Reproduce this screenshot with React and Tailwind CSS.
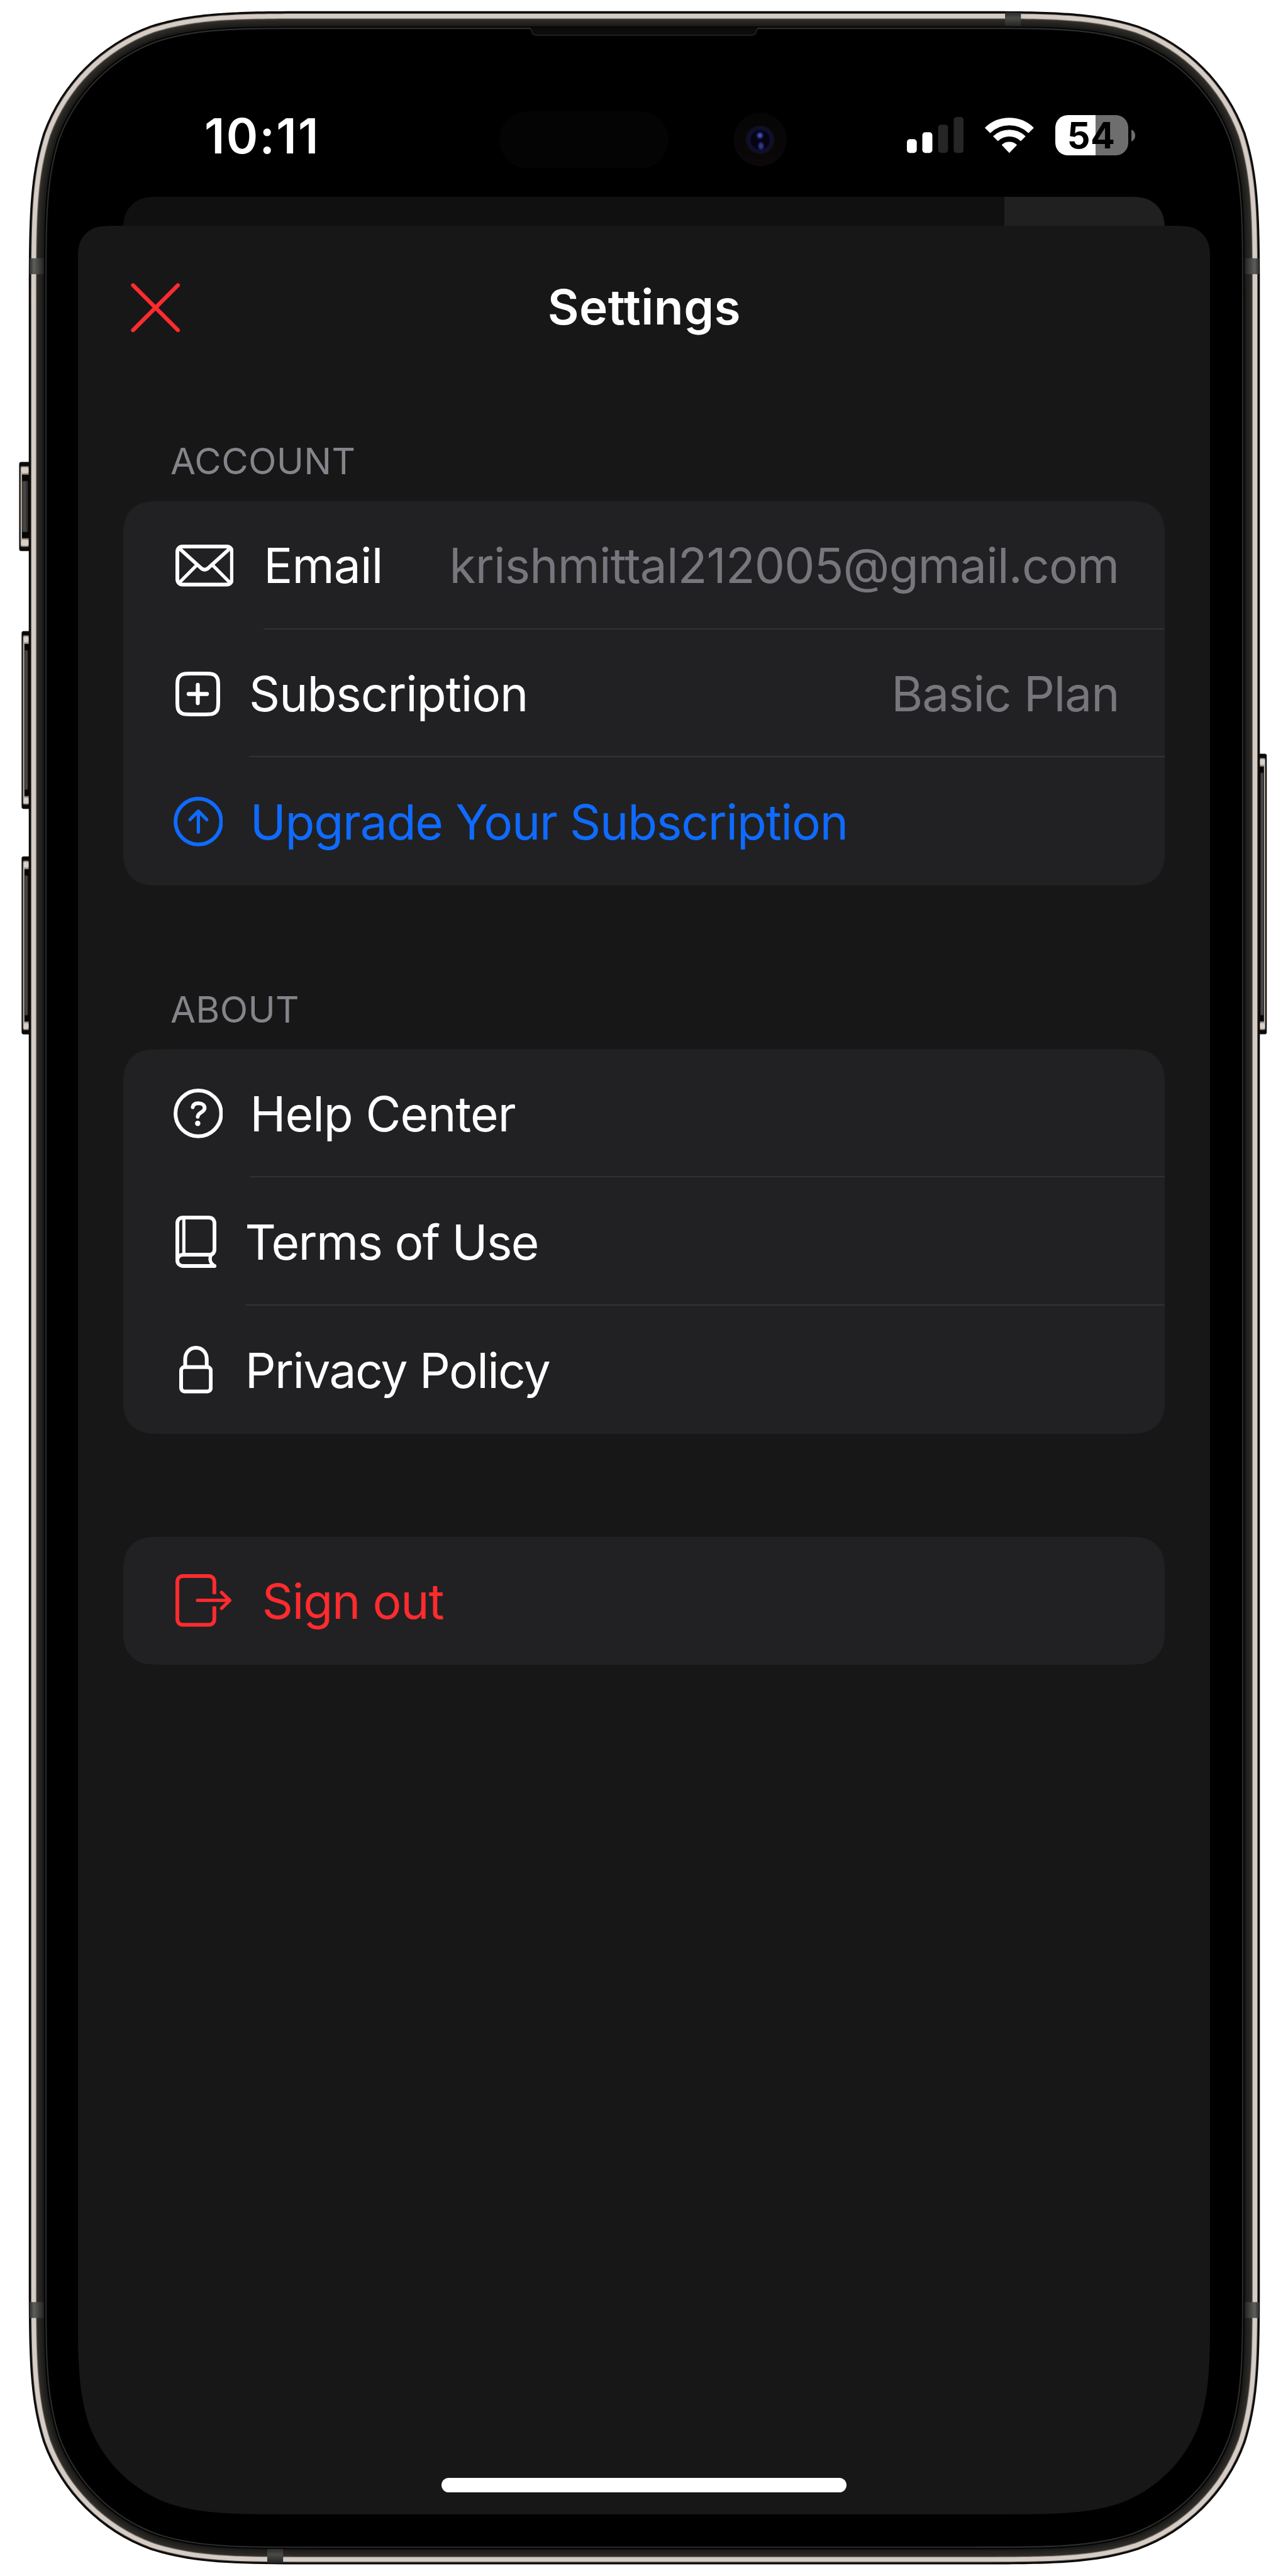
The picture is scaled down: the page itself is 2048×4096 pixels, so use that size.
// Rounded rectangle with continuous (smoothed) corners; rt and rb are the top and bottom radii.
function smoothRect(x, y, w, h, rt, rb = rt) {
  const A = 1.5287, B = 1.0885, C = 0.8684, D = 0.6315, E = 0.0749, F = 0.169, G = 0.3728;
  const r = x + w;
  const b = y + h;
  return [
    `M${x + A * rt} ${y} L${r - A * rt} ${y}`,
    `C${r - B * rt} ${y} ${r - C * rt} ${y} ${r - D * rt} ${y + E * rt}`,
    `C${r - G * rt} ${y + F * rt} ${r - F * rt} ${y + G * rt} ${r - E * rt} ${y + D * rt}`,
    `C${r} ${y + C * rt} ${r} ${y + B * rt} ${r} ${y + A * rt}`,
    `L${r} ${b - A * rb}`,
    `C${r} ${b - B * rb} ${r} ${b - C * rb} ${r - E * rb} ${b - D * rb}`,
    `C${r - F * rb} ${b - G * rb} ${r - G * rb} ${b - F * rb} ${r - D * rb} ${b - E * rb}`,
    `C${r - C * rb} ${b} ${r - B * rb} ${b} ${r - A * rb} ${b}`,
    `L${x + A * rb} ${b}`,
    `C${x + B * rb} ${b} ${x + C * rb} ${b} ${x + D * rb} ${b - E * rb}`,
    `C${x + G * rb} ${b - F * rb} ${x + F * rb} ${b - G * rb} ${x + E * rb} ${b - D * rb}`,
    `C${x} ${b - C * rb} ${x} ${b - B * rb} ${x} ${b - A * rb}`,
    `L${x} ${y + A * rt}`,
    `C${x} ${y + B * rt} ${x} ${y + C * rt} ${x + E * rt} ${y + D * rt}`,
    `C${x + F * rt} ${y + G * rt} ${x + G * rt} ${y + F * rt} ${x + D * rt} ${y + E * rt}`,
    `C${x + C * rt} ${y} ${x + B * rt} ${y} ${x + A * rt} ${y} Z`,
  ].join(' ');
}

/* ---------- Device body ---------- */

const rings = [
  [0, '#0b0b0b'],
  [4.6, '#5f564f'],
  [6.2, '#d5ccc5'],
  [16.4, '#8f867e'],
  [17.8, '#3b3936'],
  [20, '#2a2926'],
  [25, '#242320'],
  [30, '#1d1c1a'],
  [35, '#060606'],
  [38.6, '#2c2c2c'],
  [41.6, '#000000'],
];

function SideButton({ x, y, h, w, flip }) {
  return (
    <g transform={flip ? `translate(${x + w} ${y}) scale(-1 1)` : `translate(${x} ${y})`}>
      <rect x="0" y="0" width={w + 4} height={h} rx="5" fill="#0b0b0b" />
      <rect x="3.2" y="10" width={w - 3} height={h - 20} rx="3" fill="#8f867e" />
      <rect x="4.4" y="12.5" width={w - 5.5} height="14" rx="4" fill="#d9cfc7" />
      <rect x="4.4" y={h - 26.5} width={w - 5.5} height="14" rx="4" fill="#d9cfc7" />
      <rect x="3.6" y="24" width="3" height={h - 48} fill="#b9aea5" />
      <rect x="6.6" y="30" width={w - 4} height={h - 60} fill="#050505" />
      <rect x="6.6" y="44" width={w - 9} height={h - 88} rx="3" fill="#343230" />
      <rect x="9" y="46" width={(w - 9) / 2} height={h - 92} rx="2" fill="#484543" />
    </g>
  );
}

function DeviceBody() {
  return (
    <svg viewBox="0 0 3000 6000" className="absolute inset-0 h-full w-full" aria-hidden="true">
      <defs>
        <linearGradient id="bandL" x1="0" x2="1" y1="0" y2="0">
          <stop offset="0" stopColor="#2e2e2d" />
          <stop offset="0.3" stopColor="#5e5e5c" />
          <stop offset="1" stopColor="#242423" />
        </linearGradient>
        <linearGradient id="bandR" x1="1" x2="0" y1="0" y2="0">
          <stop offset="0" stopColor="#2e2e2d" />
          <stop offset="0.3" stopColor="#5e5e5c" />
          <stop offset="1" stopColor="#242423" />
        </linearGradient>
        <linearGradient id="bandT" x1="0" x2="0" y1="0" y2="1">
          <stop offset="0" stopColor="#2c2c2b" />
          <stop offset="0.4" stopColor="#4a4a48" />
          <stop offset="1" stopColor="#242423" />
        </linearGradient>
        <radialGradient id="lensTop">
          <stop offset="0" stopColor="#5c62c4" />
          <stop offset="0.5" stopColor="#2a2a82" />
          <stop offset="1" stopColor="#0a0a25" stopOpacity="0" />
        </radialGradient>
        <radialGradient id="lensLow">
          <stop offset="0" stopColor="#1b5a68" />
          <stop offset="0.6" stopColor="#301a78" />
          <stop offset="1" stopColor="#0a0a25" stopOpacity="0" />
        </radialGradient>
        <linearGradient id="lensHalo" x1="0" x2="0" y1="0" y2="1">
          <stop offset="0" stopColor="#060606" />
          <stop offset="1" stopColor="#0b070a" />
        </linearGradient>
      </defs>
      <SideButton x={44.6} y={1075.8} w={23} h={207.7} />
      <SideButton x={50.3} y={1470} w={17.5} h={414} />
      <SideButton x={50.3} y={1994.7} w={17.5} h={414.5} />
      <SideButton x={2933} y={1755.5} w={17.5} h={653.5} flip />
      {rings.map(([i, fill]) => (
        <path key={i} d={smoothRect(67 + i, 26 + i, 2867.5 - 2 * i, 5947 - 2 * i, 449 - i)} fill={fill} />
      ))}
      <rect x="69" y="601.6" width="33" height="37" fill="url(#bandL)" />
      <rect x="69" y="5362" width="33" height="37" fill="url(#bandL)" />
      <rect x="2899.5" y="601.6" width="33" height="37" fill="url(#bandR)" />
      <rect x="2899.5" y="5362" width="33" height="37" fill="url(#bandR)" />
      <rect x="2341" y="29" width="37" height="32" fill="url(#bandT)" />
      <rect x="622.5" y="5937" width="37" height="33" fill="url(#bandT)" />
      <path d="M1236 64.5C1239 73 1240 82 1248 82.5H1752C1760 82 1761 73 1764 64.5Z" fill="#0c0c0c" />
      <path d="M1236 67C1239 74 1240 82 1248 82H1752C1760 82 1761 74 1764 67" fill="none" stroke="#242424" strokeWidth="2.6" />
      <rect x="1163" y="259" width="394" height="133" rx="66.5" fill="#040404" />
      <circle cx="1770.5" cy="325" r="62" fill="url(#lensHalo)" />
      <circle cx="1770.5" cy="325.5" r="33" fill="#10111d" />
      <circle cx="1770.5" cy="325.5" r="24" fill="#05050f" stroke="#0c0c52" strokeWidth="2.5" />
      <circle cx="1770" cy="315.5" r="11" fill="url(#lensTop)" />
      <ellipse cx="1772.5" cy="340" rx="9" ry="12" fill="url(#lensLow)" />
    </svg>
  );
}

/* ---------- Status bar ---------- */

function SignalIcon() {
  return (
    <svg viewBox="0 0 132.2 83.8" className="h-[57.2px] w-[90.2px]">
      <rect x="0" y="51.8" width="23" height="32" rx="7" fill="#fff" />
      <rect x="36" y="35.6" width="23.4" height="48.2" rx="7" fill="#fff" />
      <rect x="72.8" y="17.8" width="23" height="66" rx="7" fill="#262626" />
      <rect x="109.1" y="0" width="23.1" height="83.8" rx="7" fill="#262626" />
    </svg>
  );
}

function WifiIcon() {
  return (
    <svg viewBox="0 0 114 84" className="h-[57.3px] w-[77.8px]" fill="#fff" stroke="#fff" strokeWidth="2" strokeLinejoin="round">
      <path d="M1.2 25.3A81 81 0 0 1 112.8 25.3L101.5 36.2A65 65 0 0 0 12.5 36.2Z" />
      <path d="M20.5 45.2A53 53 0 0 1 93.5 45.2L83.5 55A39 39 0 0 0 30.5 55Z" />
      <path d="M40.5 65.2A25 25 0 0 1 73.5 65.2L57 82.4Z" />
    </svg>
  );
}

function Battery() {
  return (
    <div className="flex items-center gap-[4.4px]">
      <div className="flex h-[63.5px] w-[116.3px] items-center rounded-[20px] bg-[linear-gradient(to_right,#fff_54.8%,#6e6e6e_54.8%)] pt-[1px] pl-[19px] text-[57.6px] leading-none font-bold tracking-[0.3px] text-black">
        54
      </div>
      <svg viewBox="0 0 9 28" className="h-[19px] w-[6.1px]">
        <path d="M0 0C5 2 9 7.5 9 14S5 26 0 28Z" fill="#6e6e6e" />
      </svg>
    </div>
  );
}

function StatusBar() {
  return (
    <header className="flex h-[312.7px] items-end pr-[243.4px] pb-[46.7px] pl-[325px] text-white">
      <div className="flex h-[100px] flex-1 items-center justify-between">
        <time className="text-[76.6px] leading-none font-semibold tracking-[2.3px]">10:11</time>
        <div className="flex items-center pb-[2px]">
          <SignalIcon />
          <div className="ml-[33.9px]">
            <WifiIcon />
          </div>
          <div className="ml-[34.2px]">
            <Battery />
          </div>
        </div>
      </div>
    </header>
  );
}

/* ---------- Row icons ---------- */

const line = { fill: 'none', stroke: 'currentColor', strokeWidth: 8.8, strokeLinecap: 'round', strokeLinejoin: 'round' };

function CloseIcon() {
  return (
    <svg viewBox="0 0 115 115" className="size-[78.5px]" {...line} strokeWidth="9.4">
      <path d="M5.2 5.2L109.8 109.8M109.8 5.2L5.2 109.8" />
    </svg>
  );
}

function MailIcon() {
  return (
    <svg viewBox="0 0 136 97.4" className="mt-[2px] h-[66.5px] w-[92.8px]" {...line}>
      <rect x="4.4" y="4.4" width="127.2" height="88.6" rx="12" />
      <path d="M8 8L59 54Q68 62.5 77 54L128 8" strokeWidth="8.4" />
      <path d="M8 89.5L48.5 49M128 89.5L87.5 49" strokeWidth="7.6" />
    </svg>
  );
}

function PlusSquareIcon() {
  return (
    <svg viewBox="0 0 104 104" className="mt-[2px] size-[71px]" {...line}>
      <path d={smoothRect(4.4, 4.4, 95.2, 95.2, 20)} />
      <path d="M30.6 52H73.4M52 30.6V73.4" strokeWidth="9.2" />
    </svg>
  );
}

function ArrowUpCircleIcon() {
  return (
    <svg viewBox="0 0 115.4 115.4" className="mt-[1px] size-[78.8px]" {...line}>
      <circle cx="57.7" cy="57.7" r="53.2" />
      <path d="M57.7 82V33.6M38 53.2L57.7 33.2L77.4 53.2" strokeWidth="7.6" />
    </svg>
  );
}

function HelpCircleIcon() {
  return (
    <svg viewBox="0 0 115.4 115.4" className="mt-[1px] size-[78.8px]" {...line}>
      <circle cx="57.7" cy="57.7" r="53.2" />
      <path d="M44.6 43.2C45.5 37 50.3 34.2 57.7 34.2C66.5 34.2 72.3 38.5 72.3 45C72.3 55 56.2 55.5 56.2 65.6" />
      <circle cx="56.2" cy="80.8" r="6.2" fill="currentColor" stroke="none" />
    </svg>
  );
}

function BookIcon() {
  return (
    <svg viewBox="0 0 95.4 121.8" className="h-[83.1px] w-[65.1px]" {...line}>
      <path d="M91 117.4H19C10.5 117.4 4.4 112 4.4 104V18C4.4 9.5 10 4.4 18 4.4H77C85.5 4.4 91 9.5 91 18V78C91 85 87.5 91 80 91H19C10.5 91 4.4 96 4.4 104" />
      <path d="M87 87.5C79 94 77 109 91 117" strokeWidth="8" />
      <path d="M19.5 5V90" strokeWidth="7.4" />
    </svg>
  );
}

function LockIcon() {
  return (
    <svg viewBox="0 0 78 110.6" className="h-[75.5px] w-[53.2px]" {...line}>
      <rect x="4.4" y="49.4" width="69.2" height="56.8" rx="8" />
      <path d="M13.9 48V31C13.9 16 24 4.4 39 4.4S64.1 16 64.1 31V48" strokeLinecap="butt" />
    </svg>
  );
}

function SignOutIcon() {
  return (
    <svg viewBox="0 0 131 122.4" className="mb-[1px] h-[83.6px] w-[89.4px]" {...line}>
      <path d="M90.6 46.6V18C90.6 9.5 85.5 4.4 77 4.4H18C9.5 4.4 4.4 9.5 4.4 18V104.4C4.4 113 9.5 118 18 118H77C85.5 118 90.6 113 90.6 104.4V75.2" strokeLinecap="butt" />
      <path d="M51.5 61H126M107.5 42.5L126.5 61L107.5 79.5" strokeWidth="7.8" />
    </svg>
  );
}

/* ---------- Settings list ---------- */

function Row({ icon, iconPad, gap, tracking, label, value, valueTracking, color = 'text-white', divider = 'border-transparent' }) {
  return (
    <li className={`flex h-[203.87px] items-center ${iconPad} ${color}`}>
      {icon}
      <div className={`${gap} ${divider} flex h-full flex-1 items-center justify-between border-b-2 pt-[4px] pr-[73px] text-[76.6px] leading-none whitespace-nowrap`}>
        <span className={tracking}>{label}</span>
        {value && <span className={`text-[#77767c] ${valueTracking}`}>{value}</span>}
      </div>
    </li>
  );
}

function Card({ rows, children }) {
  return (
    <ul
      className="mx-[72px] bg-[#212123]"
      style={{ clipPath: `path('${smoothRect(0, 0, 1656.6, rows * 203.87, 46)}')` }}
    >
      {children}
    </ul>
  );
}

function SectionTitle({ height, children }) {
  return (
    <h2 className={`flex items-end ${height} pb-[34.6px] pl-[147.2px] text-[58.2px] leading-none tracking-[0.3px] text-[#85848b]`}>
      {children}
    </h2>
  );
}

export default function App() {
  return (
    <div className="relative h-[4096px] w-[2048px] overflow-hidden bg-white font-['Inter',sans-serif]">
      <DeviceBody />
      <div className="relative flex flex-col">
        <StatusBar />
        <div
          className="mx-[195.7px] h-[46.4px] bg-[linear-gradient(to_right,#101010_84.6%,#202020_84.6%)]"
          style={{ clipPath: `path('${smoothRect(0, 0, 1656.6, 300, 46)}')` }}
        />
        <main
          className="mx-[123.7px] flex h-[3638.9px] flex-col bg-[#171717]"
          style={{ clipPath: `path('${smoothRect(0, 0, 1800.6, 3638.9, 43, 229)}')` }}
        >
          <nav className="grid h-[260px] grid-cols-[1fr_auto_1fr] items-center pr-[83.5px] pl-[84.3px] text-white">
            <button className="justify-self-start text-[#ff2b2e]" aria-label="Close">
              <CloseIcon />
            </button>
            <h1 className="pb-[1px] text-[76.6px] leading-none font-semibold tracking-[0.47px]">Settings</h1>
          </nav>

          <SectionTitle height="h-[177.6px]">ACCOUNT</SectionTitle>
          <Card rows={3}>
            <Row icon={<MailIcon />} iconPad="pl-[83px]" gap="ml-[47.8px]" tracking="tracking-[-0.8px]" label="Email" value="krishmittal212005@gmail.com" valueTracking="tracking-[-0.82px]" divider="border-[#323234]" />
            <Row icon={<PlusSquareIcon />} iconPad="pl-[83px]" gap="ml-[46.4px]" tracking="tracking-[-1.05px]" label="Subscription" value="Basic Plan" valueTracking="tracking-[-1.1px]" divider="border-[#323234]" />
            <Row icon={<ArrowUpCircleIcon />} iconPad="pl-[79.9px]" gap="ml-[43.4px]" tracking="tracking-[-1.17px]" label="Upgrade Your Subscription" color="text-[#0f6bff]" />
          </Card>

          <SectionTitle height="h-[260.1px]">ABOUT</SectionTitle>
          <Card rows={3}>
            <Row icon={<HelpCircleIcon />} iconPad="pl-[80px]" gap="ml-[42.9px]" tracking="tracking-[-0.9px]" label="Help Center" divider="border-[#323234]" />
            <Row icon={<BookIcon />} iconPad="pl-[83px]" gap="ml-[45.8px]" tracking="tracking-[-1.56px]" label="Terms of Use" divider="border-[#323234]" />
            <Row icon={<LockIcon />} iconPad="pl-[89.2px]" gap="ml-[51.7px]" tracking="tracking-[-1.6px]" label="Privacy Policy" />
          </Card>

          <div className="mt-[163.5px]">
            <Card rows={1}>
              <Row icon={<SignOutIcon />} iconPad="pl-[83px]" gap="ml-[48.7px]" tracking="tracking-[-1.14px]" label="Sign out" color="text-[#ff2b2e]" />
            </Card>
          </div>

          <div className="mx-auto mt-auto mb-[34.5px] h-[23px] w-[644px] rounded-full bg-white" />
        </main>
      </div>
    </div>
  );
}
